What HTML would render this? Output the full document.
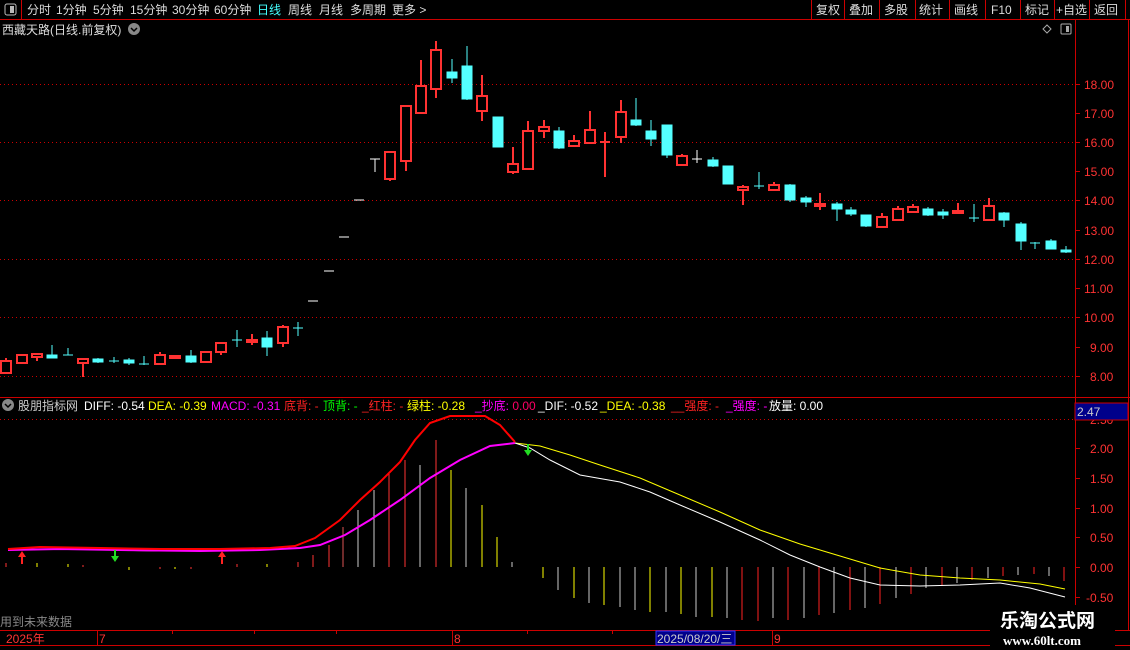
<!DOCTYPE html>
<html><head><meta charset="utf-8"><style>
html,body{margin:0;padding:0;background:#000;width:1130px;height:650px;overflow:hidden}
svg{display:block}
text{font-family:"Liberation Sans","Noto Sans CJK SC",sans-serif;font-size:12px}
</style></head><body>
<svg width="1130" height="650" viewBox="0 0 1130 650" xmlns="http://www.w3.org/2000/svg">
<g stroke="#c00" fill="none">
<line x1="0" y1="19.5" x2="1130" y2="19.5"/>
<line x1="21.5" y1="0" x2="21.5" y2="19"/>
<line x1="811.5" y1="0" x2="811.5" y2="19"/><line x1="844.5" y1="0" x2="844.5" y2="19"/><line x1="879.5" y1="0" x2="879.5" y2="19"/><line x1="915.5" y1="0" x2="915.5" y2="19"/><line x1="949.5" y1="0" x2="949.5" y2="19"/><line x1="985.5" y1="0" x2="985.5" y2="19"/><line x1="1020.5" y1="0" x2="1020.5" y2="19"/><line x1="1054.5" y1="0" x2="1054.5" y2="19"/><line x1="1089.5" y1="0" x2="1089.5" y2="19"/><line x1="1125.5" y1="0" x2="1125.5" y2="19"/>
<line x1="1075.5" y1="20" x2="1075.5" y2="630"/>
<line x1="1128.5" y1="20" x2="1128.5" y2="630"/>
<line x1="0" y1="397.5" x2="1130" y2="397.5"/>
<line x1="0" y1="630.5" x2="1130" y2="630.5"/>
<line x1="0" y1="645.5" x2="1130" y2="645.5"/>
</g>
<rect x="5" y="4" width="11" height="11" rx="2" fill="none" stroke="#bbb"/><rect x="10" y="6" width="4" height="7" fill="#bbb"/>
<g fill="#ddd">
<text x="27" y="14">分时</text><text x="56" y="14">1分钟</text><text x="93" y="14">5分钟</text><text x="130" y="14">15分钟</text><text x="172" y="14">30分钟</text><text x="214" y="14">60分钟</text>
<text x="257" y="14" fill="#4ff">日线</text><text x="288" y="14">周线</text><text x="319" y="14">月线</text><text x="350" y="14">多周期</text><text x="392" y="14">更多 &gt;</text>
<text x="816" y="14">复权</text><text x="849" y="14">叠加</text><text x="884" y="14">多股</text><text x="919" y="14">统计</text><text x="954" y="14">画线</text><text x="991" y="14">F10</text><text x="1025" y="14">标记</text><text x="1056" y="14">+自选</text><text x="1094" y="14">返回</text>
<text x="2" y="34">西藏天路(日线.前复权)</text>
</g>
<circle cx="134" cy="29" r="6" fill="#888"/><path d="M131 28 L134 31 L137 28" stroke="#000" stroke-width="1.5" fill="none"/>
<path d="M1047 25 L1051 29 L1047 33 L1043 29Z" fill="none" stroke="#aaa"/>
<rect x="1061" y="24" width="10" height="10" rx="1" fill="none" stroke="#aaa"/><rect x="1066" y="26" width="3" height="6" fill="#aaa"/>
<g stroke="#c00" stroke-dasharray="1,3">
<line x1="0" y1="84.5" x2="1075" y2="84.5"/><line x1="0" y1="142.5" x2="1075" y2="142.5"/><line x1="0" y1="200.5" x2="1075" y2="200.5"/><line x1="0" y1="259.5" x2="1075" y2="259.5"/><line x1="0" y1="317.5" x2="1075" y2="317.5"/><line x1="0" y1="376.5" x2="1075" y2="376.5"/>
<line x1="0" y1="419.5" x2="1075" y2="419.5"/>
</g>
<g fill="#f33" font-size="12">
<text x="1084" y="89">18.00</text><text x="1084" y="118">17.00</text><text x="1084" y="147">16.00</text><text x="1084" y="176">15.00</text><text x="1084" y="205">14.00</text><text x="1084" y="235">13.00</text><text x="1084" y="264">12.00</text><text x="1084" y="293">11.00</text><text x="1084" y="322">10.00</text><text x="1090" y="352">9.00</text><text x="1090" y="381">8.00</text>
<text x="1090" y="424">2.50</text><text x="1090" y="453">2.00</text><text x="1090" y="483">1.50</text><text x="1090" y="513">1.00</text><text x="1090" y="542">0.50</text><text x="1090" y="572">0.00</text><text x="1086" y="602">-0.50</text>
</g>
<g stroke="#c00">
<line x1="1075" y1="84.5" x2="1080" y2="84.5"/><line x1="1075" y1="113.5" x2="1080" y2="113.5"/><line x1="1075" y1="142.5" x2="1080" y2="142.5"/><line x1="1075" y1="171.5" x2="1080" y2="171.5"/><line x1="1075" y1="200.5" x2="1080" y2="200.5"/><line x1="1075" y1="230.5" x2="1080" y2="230.5"/><line x1="1075" y1="259.5" x2="1080" y2="259.5"/><line x1="1075" y1="288.5" x2="1080" y2="288.5"/><line x1="1075" y1="317.5" x2="1080" y2="317.5"/><line x1="1075" y1="347.5" x2="1080" y2="347.5"/><line x1="1075" y1="376.5" x2="1080" y2="376.5"/>
<line x1="1075" y1="448.5" x2="1080" y2="448.5"/><line x1="1075" y1="478.5" x2="1080" y2="478.5"/><line x1="1075" y1="508.5" x2="1080" y2="508.5"/><line x1="1075" y1="537.5" x2="1080" y2="537.5"/><line x1="1075" y1="567.5" x2="1080" y2="567.5"/><line x1="1075" y1="597.5" x2="1080" y2="597.5"/>
</g>
<g stroke="#ff3232" stroke-width="1.6" fill="#000" shape-rendering="crispEdges">
<line x1="6" y1="358" x2="6" y2="373"/><rect x="1" y="361" width="10" height="12"/>
<rect x="17" y="355" width="10" height="8"/>
<line x1="37" y1="354" x2="37" y2="361"/><rect x="32" y="354" width="10" height="3"/>
<line x1="83" y1="359" x2="83" y2="377"/><rect x="78" y="359" width="10" height="4"/>
<line x1="160" y1="352" x2="160" y2="364"/><rect x="155" y="355" width="10" height="9"/>
<rect x="170" y="356" width="10" height="2" fill="#ff3232"/>
<line x1="206" y1="351" x2="206" y2="362"/><rect x="201" y="352" width="10" height="10"/>
<line x1="221" y1="343" x2="221" y2="355"/><rect x="216" y="343" width="10" height="9"/>
<line x1="252" y1="334" x2="252" y2="345"/><rect x="247" y="340" width="10" height="2" fill="#ff3232"/>
<line x1="283" y1="325" x2="283" y2="347"/><rect x="278" y="327" width="10" height="16"/>
<line x1="390" y1="152" x2="390" y2="181"/><rect x="385" y="152" width="10" height="27"/>
<line x1="406" y1="106" x2="406" y2="171"/><rect x="401" y="106" width="10" height="55"/>
<line x1="421" y1="60" x2="421" y2="113"/><rect x="416" y="86" width="10" height="27"/>
<line x1="436" y1="41" x2="436" y2="98"/><rect x="431" y="50" width="10" height="39"/>
<line x1="482" y1="75" x2="482" y2="121"/><rect x="477" y="96" width="10" height="15"/>
<line x1="513" y1="147" x2="513" y2="174"/><rect x="508" y="164" width="10" height="8"/>
<line x1="528" y1="121" x2="528" y2="169"/><rect x="523" y="131" width="10" height="38"/>
<line x1="544" y1="120" x2="544" y2="138"/><rect x="539" y="127" width="10" height="4"/>
<line x1="574" y1="135" x2="574" y2="147"/><rect x="569" y="141" width="10" height="5"/>
<line x1="590" y1="111" x2="590" y2="143"/><rect x="585" y="130" width="10" height="13"/>
<line x1="605" y1="132" x2="605" y2="177"/><line x1="600" y1="142" x2="610" y2="142"/>
<line x1="621" y1="100" x2="621" y2="143"/><rect x="616" y="112" width="10" height="25"/>
<line x1="682" y1="154" x2="682" y2="165"/><rect x="677" y="156" width="10" height="9"/>
<line x1="743" y1="185" x2="743" y2="205"/><rect x="738" y="187" width="10" height="3"/>
<line x1="774" y1="182" x2="774" y2="191"/><rect x="769" y="185" width="10" height="5"/>
<line x1="820" y1="193" x2="820" y2="210"/><rect x="815" y="204" width="10" height="2" fill="#ff3232"/>
<line x1="882" y1="213" x2="882" y2="227"/><rect x="877" y="217" width="10" height="10"/>
<line x1="898" y1="206" x2="898" y2="220"/><rect x="893" y="209" width="10" height="11"/>
<line x1="913" y1="204" x2="913" y2="213"/><rect x="908" y="207" width="10" height="5"/>
<line x1="958" y1="203" x2="958" y2="213"/><rect x="953" y="211" width="10" height="2" fill="#ff3232"/>
<line x1="989" y1="198" x2="989" y2="220"/><rect x="984" y="206" width="10" height="14"/>
</g>
<g stroke="#54ffff" stroke-width="1.3" fill="#54ffff" shape-rendering="crispEdges">
<line x1="52" y1="345" x2="52" y2="358"/><rect x="47" y="355" width="10" height="3"/>
<line x1="68" y1="348" x2="68" y2="355"/><line x1="63" y1="355" x2="73" y2="355"/>
<line x1="98" y1="358" x2="98" y2="363"/><rect x="93" y="359" width="10" height="3"/>
<line x1="114" y1="357" x2="114" y2="363"/><line x1="109" y1="361" x2="119" y2="361"/>
<line x1="129" y1="358" x2="129" y2="365"/><rect x="124" y="360" width="10" height="3"/>
<line x1="144" y1="356" x2="144" y2="365"/><line x1="139" y1="364" x2="149" y2="364"/>
<line x1="191" y1="350" x2="191" y2="363"/><rect x="186" y="356" width="10" height="6"/>
<line x1="237" y1="330" x2="237" y2="347"/><line x1="232" y1="340" x2="242" y2="340"/>
<line x1="267" y1="331" x2="267" y2="356"/><rect x="262" y="338" width="10" height="9"/>
<line x1="298" y1="322" x2="298" y2="336"/><line x1="293" y1="328" x2="303" y2="328"/>
<line x1="452" y1="59" x2="452" y2="83"/><rect x="447" y="72" width="10" height="6"/>
<line x1="467" y1="46" x2="467" y2="100"/><rect x="462" y="66" width="10" height="33"/>
<rect x="493" y="117" width="10" height="30"/>
<line x1="559" y1="127" x2="559" y2="149"/><rect x="554" y="131" width="10" height="17"/>
<line x1="636" y1="98" x2="636" y2="126"/><rect x="631" y="120" width="10" height="5"/>
<line x1="651" y1="120" x2="651" y2="146"/><rect x="646" y="131" width="10" height="8"/>
<line x1="667" y1="125" x2="667" y2="158"/><rect x="662" y="125" width="10" height="30"/>
<line x1="713" y1="157" x2="713" y2="167"/><rect x="708" y="160" width="10" height="6"/>
<rect x="723" y="166" width="10" height="18"/>
<line x1="759" y1="172" x2="759" y2="189"/><line x1="754" y1="186" x2="764" y2="186"/>
<line x1="790" y1="184" x2="790" y2="202"/><rect x="785" y="185" width="10" height="15"/>
<line x1="806" y1="196" x2="806" y2="207"/><rect x="801" y="198" width="10" height="4"/>
<line x1="837" y1="202" x2="837" y2="221"/><rect x="832" y="204" width="10" height="5"/>
<line x1="851" y1="207" x2="851" y2="216"/><rect x="846" y="210" width="10" height="4"/>
<line x1="866" y1="215" x2="866" y2="227"/><rect x="861" y="215" width="10" height="11"/>
<line x1="928" y1="207" x2="928" y2="216"/><rect x="923" y="209" width="10" height="6"/>
<line x1="943" y1="209" x2="943" y2="219"/><rect x="938" y="212" width="10" height="3"/>
<line x1="974" y1="204" x2="974" y2="222"/><line x1="969" y1="218" x2="979" y2="218"/>
<line x1="1004" y1="212" x2="1004" y2="227"/><rect x="999" y="213" width="10" height="7"/>
<line x1="1021" y1="222" x2="1021" y2="250"/><rect x="1016" y="224" width="10" height="17"/>
<line x1="1035" y1="242" x2="1035" y2="249"/><line x1="1030" y1="243" x2="1040" y2="243"/>
<line x1="1051" y1="239" x2="1051" y2="249"/><rect x="1046" y="241" width="10" height="8"/>
<line x1="1066" y1="246" x2="1066" y2="253"/><rect x="1061" y="250" width="10" height="2"/>
</g>
<g stroke="#fff" stroke-width="1.3" shape-rendering="crispEdges">
<line x1="308" y1="301" x2="318" y2="301"/><line x1="324" y1="271" x2="334" y2="271"/><line x1="339" y1="237" x2="349" y2="237"/><line x1="354" y1="200" x2="364" y2="200"/>
<line x1="370" y1="159" x2="380" y2="159"/><line x1="375" y1="159" x2="375" y2="172"/>
<line x1="697" y1="150" x2="697" y2="163"/><line x1="692" y1="159" x2="702" y2="159"/>
</g>
<circle cx="8" cy="405" r="6" fill="#888"/><path d="M5 404 L8 407 L11 404" stroke="#000" stroke-width="1.5" fill="none"/>
<text x="18" y="410" fill="#ccc">股朋指标网</text>
<text x="84" y="410" fill="#fff">DIFF: -0.54</text>
<text x="148" y="410" fill="#ff0">DEA: -0.39</text>
<text x="211" y="410" fill="#f0f">MACD: -0.31</text>
<text x="284" y="410" fill="#f22">底背: -</text>
<text x="323" y="410" fill="#0f0">顶背: -</text>
<text x="362" y="410" fill="#f22">_红柱: -</text>
<text x="407" y="410" fill="#ff0">绿柱: -0.28</text>
<text x="475" y="410" fill="#f0f">_抄底: <tspan fill="#f06">0.00</tspan></text>
<text x="538" y="410" fill="#fff">_DIF: -0.52</text>
<text x="600" y="410" fill="#ff0">_DEA: -0.38</text>
<text x="671" y="410" fill="#f22">__强度: -</text>
<text x="726" y="410" fill="#f0f">_强度: -</text>
<text x="769" y="410" fill="#fff">放量: 0.00</text>
<rect x="1075" y="403" width="53" height="17" fill="#00008b" stroke="#c00"/>
<text x="1077" y="416" fill="#ccc">2.47</text>
<g stroke-width="1" shape-rendering="crispEdges">
<g stroke="#ff0"><line x1="37" y1="567" x2="37" y2="563"/><line x1="68" y1="567" x2="68" y2="564"/><line x1="129" y1="567" x2="129" y2="570"/><line x1="175" y1="567" x2="175" y2="569"/><line x1="267" y1="567" x2="267" y2="564"/></g>
<g stroke="#f33"><line x1="6" y1="567" x2="6" y2="563"/><line x1="83" y1="567" x2="83" y2="565"/><line x1="160" y1="567" x2="160" y2="569"/><line x1="191" y1="567" x2="191" y2="569"/><line x1="237" y1="567" x2="237" y2="564"/><line x1="298" y1="567" x2="298" y2="562"/><line x1="313" y1="567" x2="313" y2="555"/><line x1="329" y1="567" x2="329" y2="545"/></g>
<line x1="343" y1="567" x2="343" y2="527" stroke="#d55"/>
<line x1="358" y1="567" x2="358" y2="510" stroke="#ccc"/>
<line x1="374" y1="567" x2="374" y2="490" stroke="#ccc"/>
<line x1="389" y1="567" x2="389" y2="472" stroke="#f33"/>
<line x1="405" y1="567" x2="405" y2="460" stroke="#f33"/>
<line x1="420" y1="567" x2="420" y2="465" stroke="#ccc"/>
<line x1="436" y1="567" x2="436" y2="440" stroke="#f33"/>
<line x1="451" y1="567" x2="451" y2="470" stroke="#ff0"/>
<line x1="466" y1="567" x2="466" y2="488" stroke="#ccc"/>
<line x1="482" y1="567" x2="482" y2="505" stroke="#ff0"/>
<line x1="497" y1="567" x2="497" y2="537" stroke="#ff0"/>
<line x1="512" y1="567" x2="512" y2="562" stroke="#ccc"/>
<g stroke="#ff0"><line x1="543" y1="567" x2="543" y2="578"/><line x1="574" y1="567" x2="574" y2="598"/><line x1="604" y1="567" x2="604" y2="605"/><line x1="650" y1="567" x2="650" y2="612"/><line x1="681" y1="567" x2="681" y2="614"/><line x1="712" y1="567" x2="712" y2="617"/></g>
<g stroke="#ccc"><line x1="558" y1="567" x2="558" y2="590"/><line x1="589" y1="567" x2="589" y2="603"/><line x1="620" y1="567" x2="620" y2="607"/><line x1="635" y1="567" x2="635" y2="610"/><line x1="666" y1="567" x2="666" y2="612"/><line x1="696" y1="567" x2="696" y2="617"/><line x1="727" y1="567" x2="727" y2="618"/><line x1="773" y1="567" x2="773" y2="618"/><line x1="804" y1="567" x2="804" y2="618"/><line x1="834" y1="567" x2="834" y2="613"/><line x1="865" y1="567" x2="865" y2="608"/><line x1="896" y1="567" x2="896" y2="598"/><line x1="926" y1="567" x2="926" y2="588"/><line x1="957" y1="567" x2="957" y2="583"/><line x1="988" y1="567" x2="988" y2="578"/><line x1="1018" y1="567" x2="1018" y2="575"/><line x1="1049" y1="567" x2="1049" y2="576"/></g>
<g stroke="#f22"><line x1="742" y1="567" x2="742" y2="620"/><line x1="758" y1="567" x2="758" y2="621"/><line x1="788" y1="567" x2="788" y2="620"/><line x1="819" y1="567" x2="819" y2="615"/><line x1="850" y1="567" x2="850" y2="610"/><line x1="880" y1="567" x2="880" y2="604"/><line x1="911" y1="567" x2="911" y2="594"/><line x1="942" y1="567" x2="942" y2="586"/><line x1="972" y1="567" x2="972" y2="580"/><line x1="1003" y1="567" x2="1003" y2="576"/><line x1="1034" y1="567" x2="1034" y2="574"/><line x1="1064" y1="567" x2="1064" y2="581"/></g>
</g>
<polyline fill="none" stroke="#ff0" stroke-width="1" points="515,443 540,446 570,455 600,465 640,478 680,495 720,512 760,530 800,544 840,556 880,568 920,575 960,578 1000,580 1040,584 1065,589"/>
<polyline fill="none" stroke="#fff" stroke-width="1" points="515,443 530,448 550,460 580,475 620,482 650,492 680,505 720,522 760,540 790,555 820,567 850,578 880,585 920,586 960,585 1000,583 1030,588 1065,597"/>
<polyline fill="none" stroke="#ddd" stroke-width="1" points="8,550 60,549 110,550 160,551 220,551 280,549"/>
<polyline fill="none" stroke="#f0f" stroke-width="2" points="8,550 60,549 120,550 200,551 260,550 300,548 320,545 345,535 370,520 400,500 430,478 460,460 490,446 515,443"/>
<polyline fill="none" stroke="#f00" stroke-width="2" points="8,549 40,547 100,548 160,549 220,549 270,548 295,546 315,538 340,520 360,500 380,482 400,462 415,440 430,423 450,416 485,416 500,425 515,442"/>
<g fill="#f22"><path d="M22 551 L18 557 L21 557 L21 564 L23 564 L23 557 L26 557Z"/><path d="M222 551 L218 557 L221 557 L221 564 L223 564 L223 557 L226 557Z"/></g>
<g fill="#2d2"><path d="M115 562 L111 556 L114 556 L114 550 L116 550 L116 556 L119 556Z"/><path d="M528 456 L524 450 L527 450 L527 444 L529 444 L529 450 L532 450Z"/></g>
<text x="0" y="626" fill="#888">用到未来数据</text>
<g stroke="#c00"><line x1="97.5" y1="631" x2="97.5" y2="645"/><line x1="452.5" y1="631" x2="452.5" y2="645"/><line x1="772.5" y1="631" x2="772.5" y2="645"/><line x1="172.5" y1="631" x2="172.5" y2="634"/><line x1="254.5" y1="631" x2="254.5" y2="634"/><line x1="336.5" y1="631" x2="336.5" y2="634"/><line x1="527.5" y1="631" x2="527.5" y2="634"/><line x1="612.5" y1="631" x2="612.5" y2="634"/></g>
<g fill="#f33"><text x="6" y="643">2025年</text><text x="99" y="643">7</text><text x="454" y="643">8</text><text x="774" y="643">9</text></g>
<rect x="656" y="631" width="79" height="14" fill="#00008b" stroke="#33f"/>
<text x="657" y="643" fill="#ccc">2025/08/20/三</text>
<rect x="990" y="605" width="125" height="45" fill="#000"/>
<text x="1000" y="627" fill="#fff" style="font-size:19px;font-weight:bold">乐淘公式网</text>
<text x="1003" y="645" fill="#fff" style="font-family:'Liberation Serif',serif;font-size:13px;font-weight:bold">www.60lt.com</text>
</svg>
</body></html>
